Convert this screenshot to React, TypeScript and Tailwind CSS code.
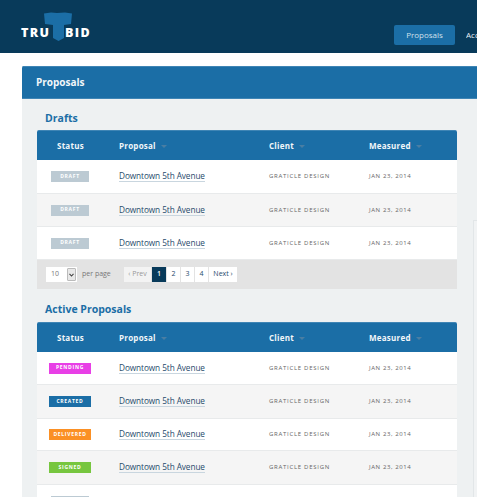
const statusStyles: Record<string, string> = {
  Draft: "bg-[#bccad3]",
  Pending: "bg-[#e83fe6]",
  Created: "bg-[#1b6ea6]",
  Delivered: "bg-[#fb9024]",
  Signed: "bg-[#77c63f]",
};

function Caret() {
  return <span className="ml-[5px] mt-[2px] inline-block border-x-[3px] border-t-[3px] border-x-transparent border-t-[#4a7ea3]" />;
}

function TableHead() {
  return (
    <div className="flex h-[30px] items-center rounded-t-[2px] border-t border-[#3f85b5] bg-[#1b6ea6] text-[8px] font-bold tracking-[0.03em] text-[#f2f6f9]">
      <div className="w-[82px] pl-[20px]">Status</div>
      <div className="flex w-[150px] items-center">Proposal<Caret /></div>
      <div className="flex w-[100px] items-center">Client<Caret /></div>
      <div className="flex items-center">Measured<Caret /></div>
    </div>
  );
}

function Row({ status, even, h }: { status: string; even: boolean; h: string }) {
  const draft = status === "Draft";
  return (
    <div className={`flex items-center border-b border-[#e8eaeb] ${h} ${even ? "bg-[#f5f5f5]" : "bg-white"}`}>
      <div className="w-[82px] pl-[12px]">
        <span
          className={`flex h-[11px] items-center justify-center text-[5px] font-bold tracking-[0.14em] text-white uppercase ${statusStyles[status]} ${draft ? "ml-[2px] w-[38px]" : "w-[42px]"}`}
        >
          {status}
        </span>
      </div>
      <div className="flex w-[150px] items-center pb-[1px]">
        <span className="border-b border-[#c9d6df] text-[8.25px] leading-[11px] tracking-[-0.01em] text-[#1f4a6b]">
          Downtown 5th Avenue
        </span>
      </div>
      <div className="w-[100px] text-[6px] tracking-[0.12em] text-[#666] uppercase">Graticle Design</div>
      <div className="text-[6px] tracking-[0.1em] text-[#666] uppercase">Jan 23, 2014</div>
    </div>
  );
}

function Pager() {
  const cell = "flex h-[15px] items-center justify-center bg-white text-[7px] text-[#1f4a6b]";
  return (
    <div className="flex h-[29px] items-center bg-[#e3e3e3] pl-[9px] text-[#777]">
      <div className="flex h-[15px] w-[31px] items-center justify-between bg-white pl-[5px] pr-[1px] text-[7px]">
        10
        <span className="flex h-[13px] w-[9px] items-center justify-center rounded-[1px] border border-[#bbb] bg-[#e8e8e8] text-[#444]">
          <svg width="5" height="4" viewBox="0 0 5 4" fill="none" stroke="currentColor" strokeWidth="1.1">
            <path d="M0.5 0.8 2.5 3 4.5 0.8" />
          </svg>
        </span>
      </div>
      <span className="ml-[5px] w-[42px] text-[7px]">per page</span>
      <div className="flex gap-px">
        <div className={`${cell} w-[27px] !bg-[#f3f3f3] !text-[#999]`}>‹ Prev</div>
        <div className={`${cell} w-[14px] !bg-[#083a5a] font-semibold !text-white`}>1</div>
        <div className={`${cell} w-[13px]`}>2</div>
        <div className={`${cell} w-[13px]`}>3</div>
        <div className={`${cell} w-[13px]`}>4</div>
        <div className={`${cell} w-[28px]`}>Next ›</div>
      </div>
    </div>
  );
}

export default function App() {
  return (
    <div className="h-[497px] w-[477px] overflow-hidden bg-white font-['Open_Sans',sans-serif]">
      <header className="flex h-[53px] items-start justify-between overflow-hidden bg-[#083a5a]">
        <div className="relative ml-[21px] mt-[26px] flex items-center text-[12.5px] font-extrabold leading-[13px] tracking-[0.11em] text-white">
          <svg className="absolute left-[22px] top-[-14px]" width="30" height="30" viewBox="0 0 30 30">
            <path d="M1 1.5 8 0.5 14 1 22 0.5 29 1.5 28 12 21 13 21 26 15.5 29 10 26 10 13 2 12Z" fill="#1b6ea6" />
          </svg>
          <span className="relative w-[30px]">TRU</span>
          <span className="relative ml-[14px]">BID</span>
        </div>
        <nav className="mr-[-11px] mt-[25px] flex items-center text-[8px] text-[#e9f0f5]">
          <span className="flex h-[20px] w-[61px] items-center justify-center rounded-[2px] bg-[#1b6ea6] text-[#cfe0ec]">Proposals</span>
          <span className="ml-[11px] w-[22px] overflow-hidden">Accounts</span>
        </nav>
      </header>

      <main className="mt-[13px] ml-[22px] w-[480px] overflow-hidden rounded-tl-[2px]">
        <h1 className="flex h-[33px] items-center border-y border-[#3f85b5] bg-[#1b6ea6] pl-[14px] text-[10px] font-bold text-[#f2f6f9]">
          Proposals
        </h1>
        <div className="flex bg-[#eef1f2] pl-[15px]">
          <div className="w-[420px]">
            <h2 className="flex h-[31px] items-center pl-[8px] pt-[9px] text-[10.5px] font-bold text-[#1b6ea6]">Drafts</h2>
            <TableHead />
            <Row status="Draft" even={false} h="h-[34px]" />
            <Row status="Draft" even h="h-[33px]" />
            <Row status="Draft" even={false} h="h-[33px]" />
            <Pager />
            <h2 className="flex h-[33px] items-center pl-[8px] pt-[9px] text-[10.5px] font-bold text-[#1b6ea6]">Active Proposals</h2>
            <TableHead />
            <Row status="Pending" even={false} h="h-[33px]" />
            <Row status="Created" even h="h-[34px]" />
            <Row status="Delivered" even={false} h="h-[32px]" />
            <Row status="Signed" even h="h-[34px]" />
            <Row status="Draft" even={false} h="h-[33px]" />
          </div>
          <aside className="ml-[16px] mt-[121px] h-[300px] w-[20px] border-l border-t border-[#e2e6e8] bg-[#f1f3f4]" />
        </div>
      </main>
    </div>
  );
}
